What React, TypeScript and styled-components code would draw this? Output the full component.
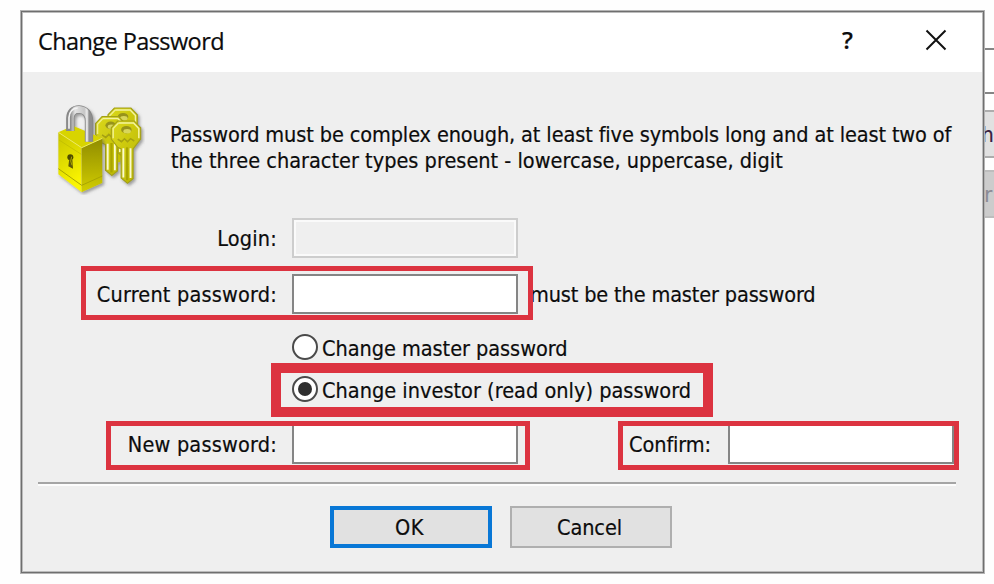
import React from "react";
import styled, { createGlobalStyle } from "styled-components";

const GlobalStyle = createGlobalStyle`
  * { box-sizing: border-box; }
  body { margin: 0; background: #fff; overflow: hidden; }
`;

const Desktop = styled.main`
  display: flex;
  align-items: flex-start;
  width: 994px;
  height: 584px;
  overflow: hidden;
  background: #fefefe;
  font-family: "DejaVu Sans Condensed", "DejaVu Sans", Tahoma, sans-serif;
  font-stretch: condensed;
  font-size: 21.5px;
  line-height: 26px;
  color: #0c0c0c;
  -webkit-text-stroke: 0.2px currentColor;
`;

const Dialog = styled.section`
  flex: none;
  display: flex;
  flex-direction: column;
  width: 963px;
  height: 562px;
  margin: 11px 0 0 21px;
  padding: 1px;
  border: 1px solid #6f6f6f;
  background: #bcbcbc;
  box-shadow: 0 0 0 1px #b4b4b4;
  z-index: 1;
`;

const TitleBar = styled.header`
  display: flex;
  align-items: center;
  height: 59px;
  padding: 0 35px 0 15px;
  background: #fff;
`;

const Title = styled.h1`
  flex: 1;
  margin: 0 0 3px;
  font: 400 23.5px/30px "Open Sans", "Segoe UI", sans-serif;
  letter-spacing: -0.58px;
`;

const HelpButton = styled.span`
  margin: 0 72px 5px 0;
  font: 600 24px/30px "Open Sans", "Segoe UI", sans-serif;
`;

const CloseIcon = styled.svg`
  width: 22px;
  height: 22px;
  margin-bottom: 5px;
`;

const Body = styled.div`
  flex: 1;
  display: flex;
  flex-direction: column;
  background: #efefef;
`;

const Intro = styled.div`
  display: flex;
  height: 90px;
  margin: 33px 0 23px 34px;
`;

const LockIcon = styled.svg`
  flex: none;
  width: 88px;
  height: 90px;
`;

const IntroText = styled.p`
  margin: 17px 0 0 25px;
`;

const Line = styled.span<{ $tracking?: number; $indent?: number }>`
  display: block;
  white-space: nowrap;
  padding-left: ${(p) => p.$indent ?? 0}px;
  letter-spacing: ${(p) => p.$tracking ?? 0}px;
`;

const FieldRow = styled.div<{ $gap: number }>`
  display: flex;
  align-items: center;
  height: 40px;
  margin-bottom: ${(p) => p.$gap}px;
`;

const Group = styled.div`
  position: relative;
  display: flex;
  align-items: center;
  height: 40px;
`;

const Label = styled.label<{ $width: number; $gap?: number; $tracking?: number }>`
  width: ${(p) => p.$width}px;
  margin-right: ${(p) => p.$gap ?? 15}px;
  padding-top: 1px;
  text-align: right;
  white-space: nowrap;
  letter-spacing: ${(p) => p.$tracking ?? 0}px;
`;

const Input = styled.input`
  width: 226px;
  height: 40px;
  padding: 0 6px;
  border: 2px solid #858585;
  border-radius: 0;
  background: #fff;
  font: inherit;
  outline: none;

  &:disabled {
    border-color: #cdcdcd;
    background: #efefef;
    box-shadow: inset 0 0 0 2px #fafafa;
  }
`;

const Hint = styled.span`
  margin-left: 12px;
  padding-top: 1px;
  white-space: nowrap;
  letter-spacing: -0.14px;
`;

const RadioRow = styled.div<{ $gap: number }>`
  position: relative;
  display: flex;
  align-items: center;
  width: 420px;
  height: 26px;
  margin: 0 0 ${(p) => p.$gap}px 269px;
`;

const RadioMark = styled.span<{ $checked?: boolean }>`
  flex: none;
  display: grid;
  place-items: center;
  width: 26px;
  height: 26px;
  border: 2px solid #4a4a4a;
  border-radius: 50%;
  background: #fff;

  &::after {
    content: "";
    width: 14px;
    height: 14px;
    border-radius: 50%;
    background: ${(p) => (p.$checked ? "#2e2e2e" : "transparent")};
  }
`;

const RadioLabel = styled.span<{ $tracking?: number }>`
  margin-left: 4px;
  padding-top: 3px;
  white-space: nowrap;
  letter-spacing: ${(p) => p.$tracking ?? 0}px;
`;

const Highlight = styled.span<{ $inset: string; $weight: number }>`
  position: absolute;
  inset: ${(p) => p.$inset};
  border: ${(p) => p.$weight}px solid #dc3340;
  pointer-events: none;
`;

const Separator = styled.hr`
  width: 918px;
  height: 4px;
  margin: 0 0 20px 15px;
  border: 0;
  border-top: 2px solid #a5a5a5;
  background: #fcfcfc;
`;

const Actions = styled.footer`
  display: flex;
  gap: 18px;
  margin-left: 307px;
`;

const Button = styled.button<{ $primary?: boolean; $tracking: number }>`
  width: 162px;
  height: 42px;
  padding: 2px 3px 0 0;
  border: ${(p) => (p.$primary ? "4px solid #0877d6" : "2px solid #afafaf")};
  background: #e1e1e1;
  color: inherit;
  font: inherit;
  font-stretch: condensed;
  letter-spacing: ${(p) => p.$tracking}px;
`;

const Backdrop = styled.aside`
  flex: none;
  display: flex;
  flex-direction: column;
  width: 60px;
  margin-left: -20px;
  padding-top: 48px;
`;

const BackdropField = styled.div`
  height: 46px;
  margin-bottom: 16px;
  border: 2px solid #858585;
  background: #fff;
`;

const BackdropButton = styled.div<{ $disabled?: boolean }>`
  height: 48px;
  margin-bottom: 12px;
  padding: ${(p) => (p.$disabled ? "10px 0 0 7px" : "10px 0 0 2px")};
  border: 2px solid ${(p) => (p.$disabled ? "#bdbdbd" : "#adadad")};
  background: ${(p) => (p.$disabled ? "#cccccc" : "#e1e1e1")};
  color: ${(p) => (p.$disabled ? "#8b8b95" : "#3a2040")};
  white-space: nowrap;
`;

const Key = ({ x, y, length }: { x: number; y: number; length: number }) => (
  <g transform={`translate(${x} ${y}) scale(1.13)`}>
    <path
      d={`M-22 -38L22 -38L39 -20L39 10L22 32L19 36V${length - 12}L4 ${length}L-13 ${length - 14}V36L-22 32L-39 10V-20Z`}
      fill="url(#keyGold)"
      stroke="#a3a019"
      strokeWidth="3"
    />
    <path d="M-20 -33H20L34 -18V8" fill="none" stroke="#f4f3a0" strokeWidth="4" />
    <path d="M-34 8V-18L-20 -33" fill="none" stroke="#f0ef8c" strokeWidth="4" />
    <path d={`M-7 34V${length - 15}M12 34V${length - 14}`} stroke="#fbfad0" strokeWidth="5" />
    <path d={`M3 32V${length - 8}`} stroke="#a9a400" strokeWidth="6" />
    <ellipse cx="1" cy="-15" rx="14" ry="10" fill="#97931a" />
    <ellipse cx="3" cy="-11" rx="10" ry="6" fill="#d8d65a" />
    <path d="M-22 10L-12 17L-4 9L4 17L12 9L22 15" fill="none" stroke="#a5a112" strokeWidth="4" />
  </g>
);

const LockAndKeys = () => (
  <LockIcon viewBox="36 30 264 270" aria-hidden="true">
    <defs>
      <linearGradient id="keyGold" x1="0" y1="0" x2="1" y2="1">
        <stop offset="0" stopColor="#dcd91b" />
        <stop offset="1" stopColor="#b8b400" />
      </linearGradient>
      <linearGradient id="lockFront" x1="0" y1="0" x2="0.3" y2="1">
        <stop offset="0" stopColor="#c9c500" />
        <stop offset="0.5" stopColor="#e0dc00" />
        <stop offset="1" stopColor="#fbf500" />
      </linearGradient>
      <linearGradient id="lockSide" x1="0" y1="0" x2="0" y2="1">
        <stop offset="0" stopColor="#908c00" />
        <stop offset="0.6" stopColor="#b7b300" />
        <stop offset="1" stopColor="#d2ce00" />
      </linearGradient>
      <linearGradient id="steel" x1="0" y1="0" x2="1" y2="0">
        <stop offset="0" stopColor="#8a8a8a" />
        <stop offset="0.25" stopColor="#e4e4e4" />
        <stop offset="0.75" stopColor="#c6c6c6" />
        <stop offset="0.9" stopColor="#ededed" />
        <stop offset="1" stopColor="#8e8e8e" />
      </linearGradient>
      <filter id="softShadow" x="-20%" y="-20%" width="150%" height="150%">
        <feDropShadow dx="5" dy="6" stdDeviation="4" floodColor="#555" floodOpacity="0.55" />
      </filter>
    </defs>
    <g filter="url(#softShadow)">
      <path d="M184 155L202 150V206L190 210L180 190ZM215 150L232 155L226 200L216 204Z" fill="#c5c100" />
      <Key x={233} y={82} length={94} />
      <Key x={196} y={108} length={118} />
      <Key x={243} y={121} length={127} />
    </g>
    <g filter="url(#softShadow)">
      <path d="M40 112L84 92L172 130L110 158Z" fill="#d8d400" />
      <path d="M40 112L110 158V292L40 238Z" fill="url(#lockFront)" />
      <path d="M110 158L172 130V264L110 292Z" fill="url(#lockSide)" />
      <path d="M40 112L110 158L172 130" fill="none" stroke="#eeeb63" strokeWidth="3" />
      <path d="M40 221L110 271L172 243" fill="none" stroke="#a9a500" strokeWidth="3" />
      <path d="M42 135L109 178" fill="none" stroke="#bdb900" strokeWidth="2" />
      <path
        d="M76 108V70C76 53 86 43 102 43C121 44 132 58 132 78V140"
        fill="none"
        stroke="#858585"
        strokeWidth="25"
      />
      <path
        d="M76 108V70C76 53 86 43 102 43C121 44 132 58 132 78V140"
        fill="none"
        stroke="url(#steel)"
        strokeWidth="20"
      />
      <path d="M72 101V68C73 50 83 40 98 39" fill="none" stroke="#f3f3f3" strokeWidth="5" />
      <ellipse cx="76" cy="187" rx="9" ry="9" fill="#4e4b05" />
      <path d="M73 191L82 195L84 221L70 214Z" fill="#5b5807" />
      <path d="M80 185L77 198L81 211" fill="none" stroke="#aaa500" strokeWidth="3" />
    </g>
  </LockIcon>
);

export default function App() {
  return (
    <Desktop>
      <GlobalStyle />
      <Dialog role="dialog" aria-label="Change Password">
        <TitleBar>
          <Title>Change Password</Title>
          <HelpButton>?</HelpButton>
          <CloseIcon viewBox="0 0 22 22" aria-label="Close">
            <path d="M1.5 1.5L20.5 20.5M20.5 1.5L1.5 20.5" stroke="#111" strokeWidth="2" />
          </CloseIcon>
        </TitleBar>
        <Body>
          <Intro>
            <LockAndKeys />
            <IntroText>
              <Line $tracking={-0.11}>
                Password must be complex enough, at least five symbols long and at least two of
              </Line>
              <Line $tracking={0.01} $indent={1}>
                the three character types present - lowercase, uppercase, digit
              </Line>
            </IntroText>
          </Intro>

          <FieldRow $gap={16}>
            <Label $width={254} $tracking={0.2}>Login:</Label>
            <Input disabled aria-label="Login" />
          </FieldRow>

          <FieldRow $gap={20}>
            <Group>
              <Label $width={254} $tracking={0.19}>Current password:</Label>
              <Input aria-label="Current password" />
              <Highlight $inset="-8px -15px -6px 58px" $weight={5} />
            </Group>
            <Hint>must be the master password</Hint>
          </FieldRow>

          <RadioRow $gap={16}>
            <RadioMark />
            <RadioLabel $tracking={-0.04}>Change master password</RadioLabel>
          </RadioRow>
          <RadioRow $gap={22}>
            <RadioMark $checked />
            <RadioLabel $tracking={0.02}>Change investor (read only) password</RadioLabel>
            <Highlight $inset="-13px -1px -15px -21px" $weight={10} />
          </RadioRow>

          <FieldRow $gap={18}>
            <Group>
              <Label $width={254} $tracking={0.2}>New password:</Label>
              <Input aria-label="New password" />
              <Highlight $inset="-3px -12px -6px 83px" $weight={5} />
            </Group>
            <Group>
              <Label $width={193} $gap={17} $tracking={-0.1}>Confirm:</Label>
              <Input aria-label="Confirm" />
              <Highlight $inset="-3px -5px -6px 100px" $weight={5} />
            </Group>
          </FieldRow>

          <Separator />
          <Actions>
            <Button $primary $tracking={0.6}>OK</Button>
            <Button $tracking={-0.1}>Cancel</Button>
          </Actions>
        </Body>
      </Dialog>
      <Backdrop>
        <BackdropField />
        <BackdropButton>Ch</BackdropButton>
        <BackdropButton $disabled>Pr</BackdropButton>
      </Backdrop>
    </Desktop>
  );
}
